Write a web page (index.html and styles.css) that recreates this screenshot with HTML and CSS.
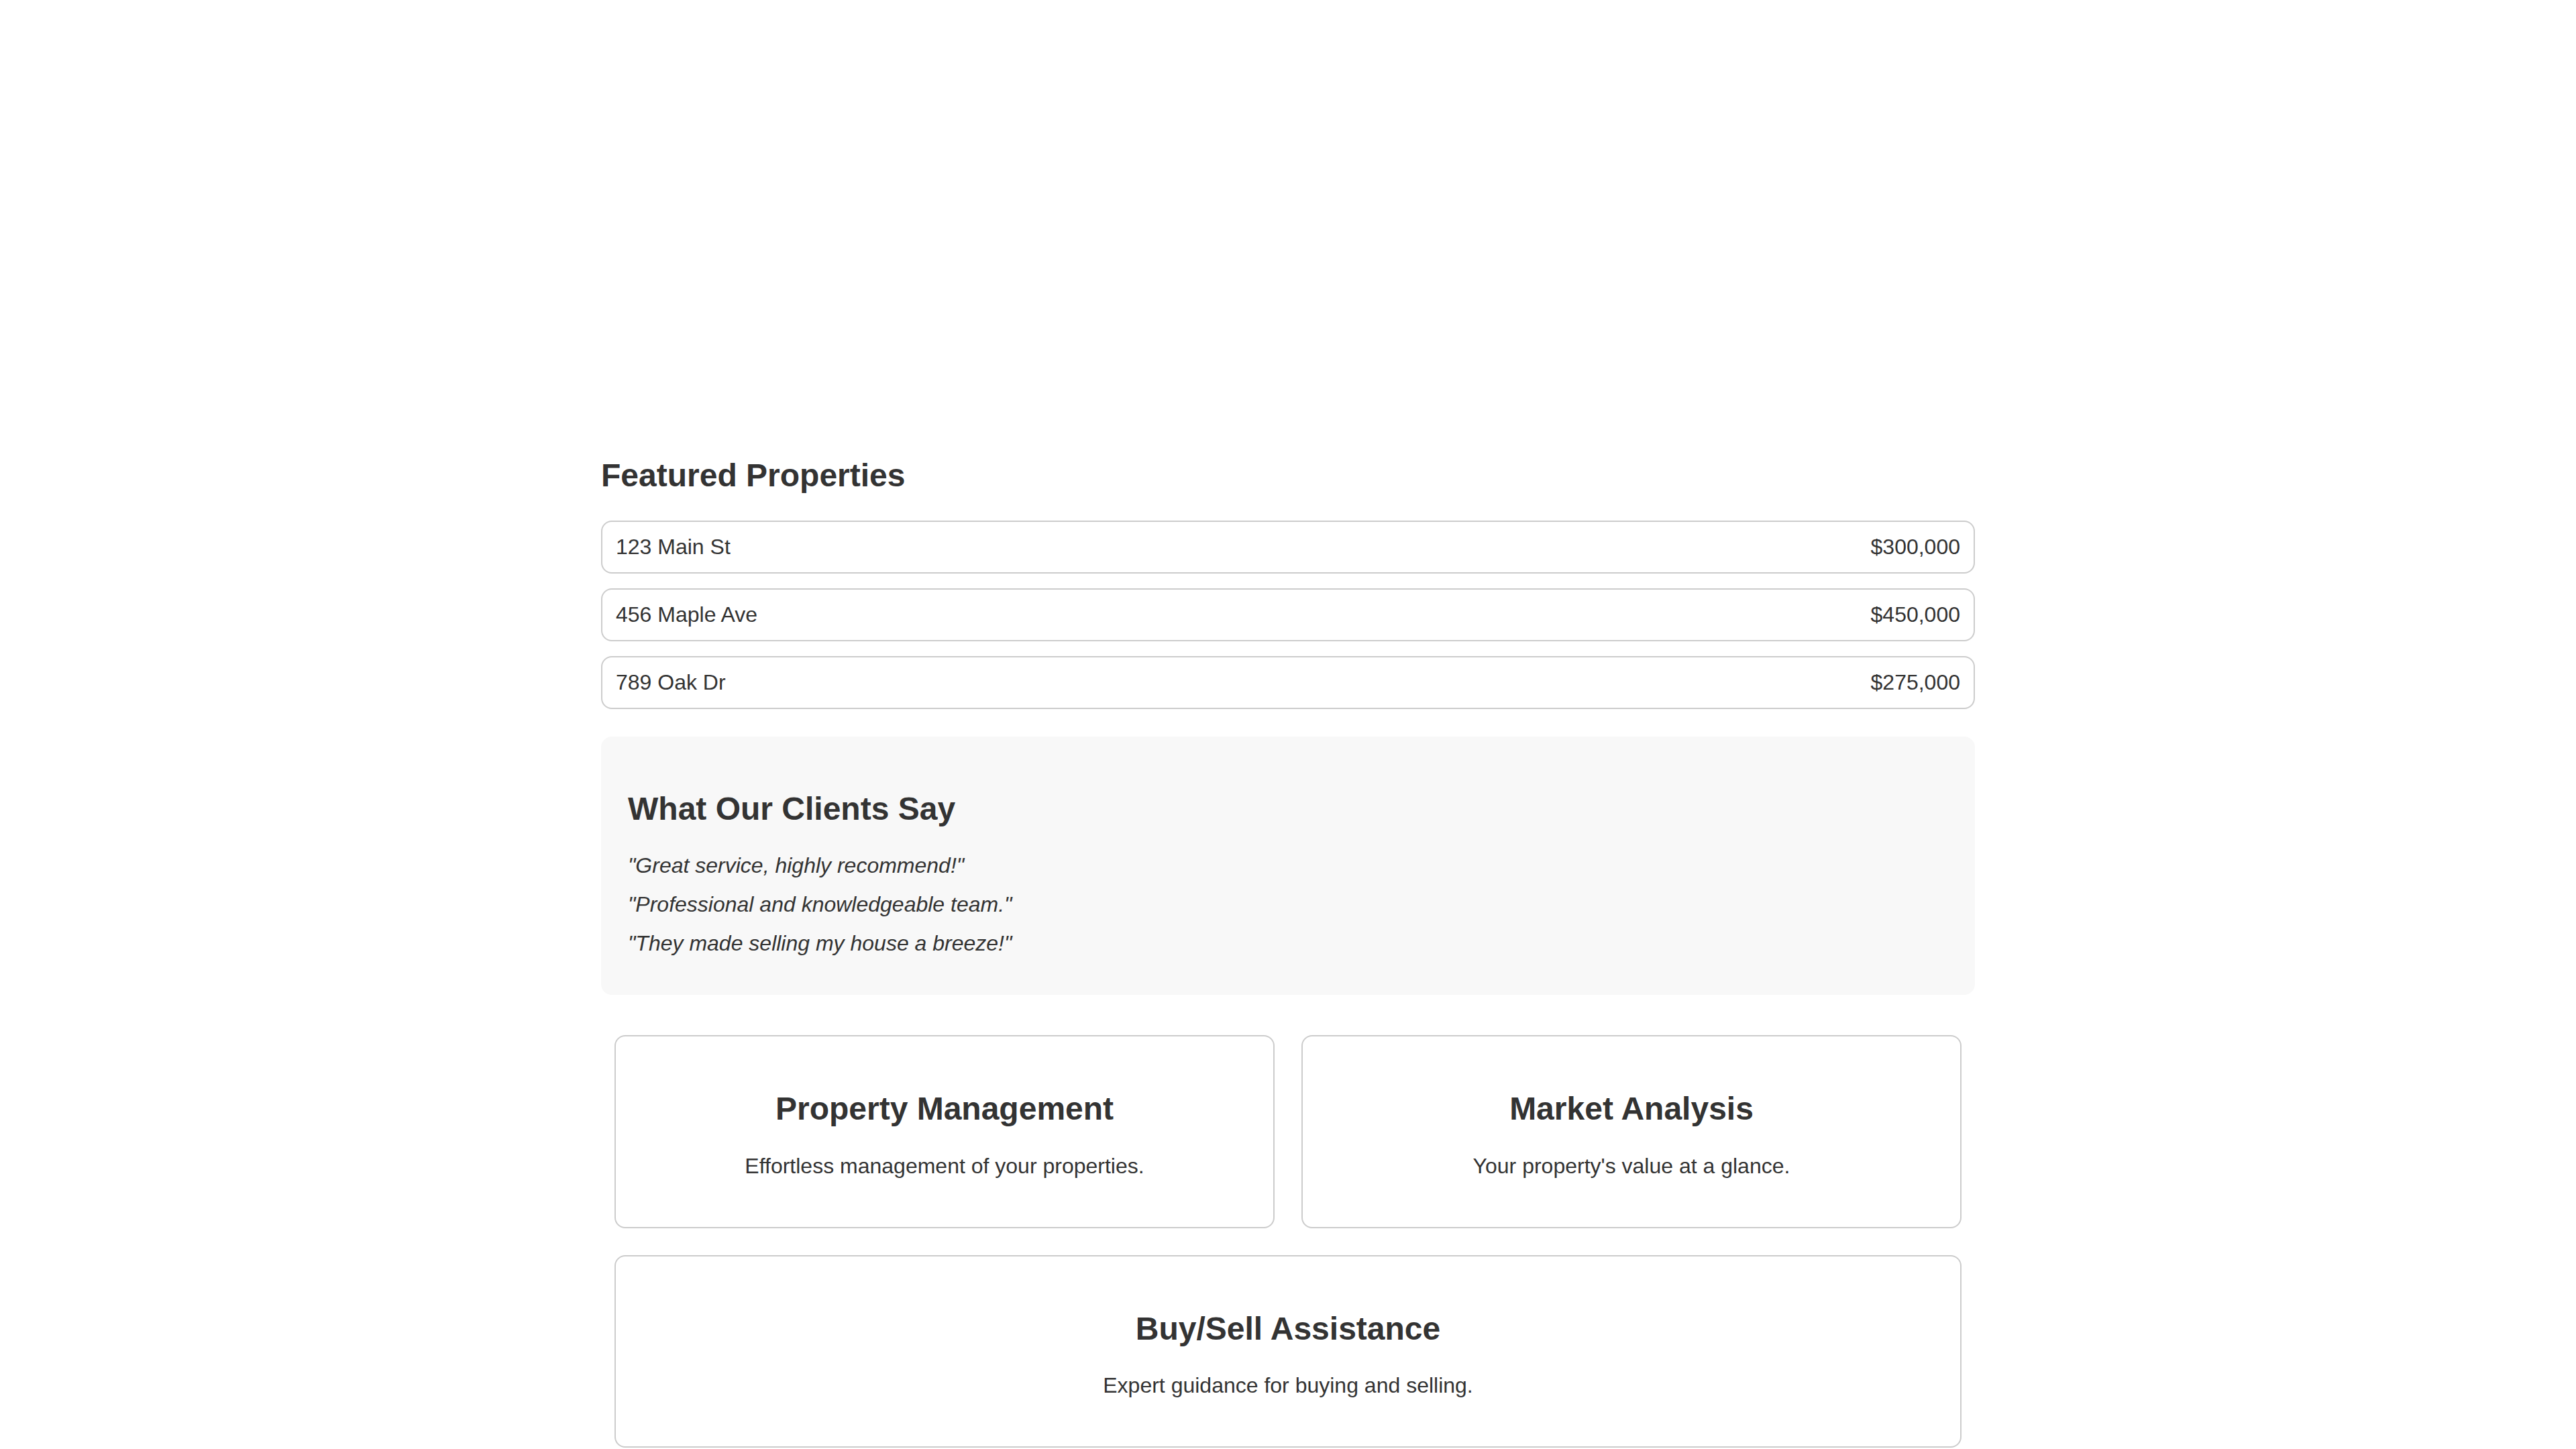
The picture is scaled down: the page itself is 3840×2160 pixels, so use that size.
FILE: index.html
```html
<!DOCTYPE html>
<html lang="en">
<head>
<meta charset="utf-8">
<title>Real Estate</title>
<link rel="stylesheet" href="styles.css">
</head>
<body>
<main class="page">
  <section class="featured">
    <h2 class="section-title">Featured Properties</h2>
    <ul class="property-list">
      <li class="property"><span class="address">123 Main St</span><span class="price">$300,000</span></li>
      <li class="property"><span class="address">456 Maple Ave</span><span class="price">$450,000</span></li>
      <li class="property"><span class="address">789 Oak Dr</span><span class="price">$275,000</span></li>
    </ul>
  </section>
  <section class="testimonials">
    <h2 class="section-title">What Our Clients Say</h2>
    <p class="quote">"Great service, highly recommend!"</p>
    <p class="quote">"Professional and knowledgeable team."</p>
    <p class="quote">"They made selling my house a breeze!"</p>
  </section>
  <section class="services">
    <div class="service">
      <h2 class="service-title">Property Management</h2>
      <p class="service-text">Effortless management of your properties.</p>
    </div>
    <div class="service">
      <h2 class="service-title">Market Analysis</h2>
      <p class="service-text">Your property's value at a glance.</p>
    </div>
    <div class="service service-wide">
      <h2 class="service-title">Buy/Sell Assistance</h2>
      <p class="service-text">Expert guidance for buying and selling.</p>
    </div>
  </section>
</main>
</body>
</html>
```
FILE: styles.css
```css
html, body {
  margin: 0;
  padding: 0;
  background: #ffffff;
}

body {
  font-family: "Liberation Sans", Arial, sans-serif;
  font-size: 32px;
  color: #333333;
}

.page {
  max-width: 2048px;
  margin: 0 auto;
  padding-top: 681px;
}

.section-title {
  font-size: 48px;
  font-weight: bold;
  margin: 0.83em 0;
}

.featured .section-title {
  margin-top: 0;
}

.property-list {
  list-style: none;
  margin: 0 0 41px;
  padding: 0;
  display: flex;
  flex-direction: column;
  gap: 22px;
}

.property {
  display: flex;
  justify-content: space-between;
  align-items: center;
  height: 75px;
  padding: 0 20px;
  border: 2px solid #cccccc;
  border-radius: 16px;
}

.testimonials {
  background: #f8f8f8;
  border-radius: 16px;
  padding: 40px;
}

.quote {
  font-style: italic;
  margin: 20.8px 0;
}

.quote:last-child {
  margin-bottom: 18px;
}

.services {
  display: flex;
  flex-wrap: wrap;
  margin-top: 40px;
}

.service {
  flex: 1 1 calc(50% - 40px);
  margin: 20px;
  border: 2px solid #cccccc;
  border-radius: 16px;
  padding: 40px;
  text-align: center;
  box-sizing: border-box;
}

.service-wide {
  flex-basis: calc(100% - 40px);
}

.service-title {
  font-size: 48px;
  margin: 0.83em 0;
}

.service-text {
  margin: 1em 0;
}
```
